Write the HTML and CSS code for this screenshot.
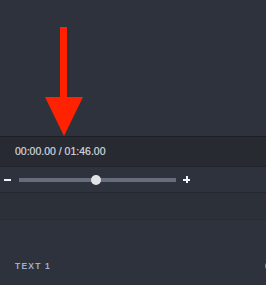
FILE: index.html
```html
<!DOCTYPE html>
<html lang="en">
<head>
  <meta charset="UTF-8" />
  <title>Timeline</title>
  <link rel="stylesheet" href="styles.css">
</head>
<body>
  <div class="stage">
    <svg class="arrow" width="266" height="136" viewBox="0 0 266 136">
      <rect x="60" y="27" width="7" height="71" fill="#ff2200" />
      <polygon points="45,97 83,97 64,136" fill="#ff2200" />
    </svg>
  </div>
  <div class="timebar">00:00.00 / 01:46.00</div>
  <div class="zoom">
    <span class="minus"></span>
    <div class="track">
      <span class="thumb"></span>
    </div>
    <span class="plus"></span>
  </div>
  <div class="strip"></div>
  <div class="layers">
    <div class="layer">
      <span class="label">TEXT 1</span>
      <span class="dot"></span>
    </div>
  </div>
</body>
</html>
```

FILE: styles.css
```css
body {
  margin: 0;
  background: #2e323c;
  font-family: 'Liberation Sans', Arial, sans-serif;
  overflow: hidden;
  height: 285px;
}
.stage {
  height: 136px;
}
.arrow {
  display: block;
}
.timebar {
  border-top: 1px solid #1c1e23;
  background: #272a31;
  box-sizing: border-box;
  height: 30px;
  line-height: 29px;
  padding-left: 15px;
  font-size: 10.5px;
  color: #d3d7df;
  -webkit-text-stroke: 0.2px #d3d7df;
}
.zoom {
  border-top: 1px solid #22252b;
  height: 25px;
  display: flex;
  align-items: center;
}
.minus {
  width: 7px;
  height: 2px;
  background: #f2f4f8;
  margin-left: 4px;
}
.track {
  position: relative;
  width: 157px;
  height: 4px;
  background: #676c7d;
  margin-left: 8px;
}
.thumb {
  position: absolute;
  left: 72px;
  top: -3px;
  width: 10px;
  height: 10px;
  border-radius: 50%;
  background: #e2e3e8;
}
.plus {
  position: relative;
  width: 7px;
  height: 7px;
  margin-left: 7px;
}
.plus::before,
.plus::after {
  content: "";
  position: absolute;
  background: #f2f4f8;
}
.plus::before {
  left: 0;
  top: 2.5px;
  width: 7px;
  height: 2px;
}
.plus::after {
  left: 2.5px;
  top: 0;
  width: 2px;
  height: 7px;
}
.strip {
  border-top: 1px solid #25282f;
  height: 26px;
  background: #2c3039;
}
.layers {
  border-top: 1px solid #282b33;
}
.layer {
  display: flex;
  justify-content: space-between;
  align-items: center;
  padding-top: 40px;
  height: 12px;
}
.label {
  margin-left: 15px;
  font-size: 8.5px;
  font-weight: bold;
  letter-spacing: 1.2px;
  color: #9fb0cc;
}
.dot {
  width: 8px;
  height: 8px;
  border-radius: 50%;
  background: #5b8fd6;
  margin-right: -7px;
}
```
